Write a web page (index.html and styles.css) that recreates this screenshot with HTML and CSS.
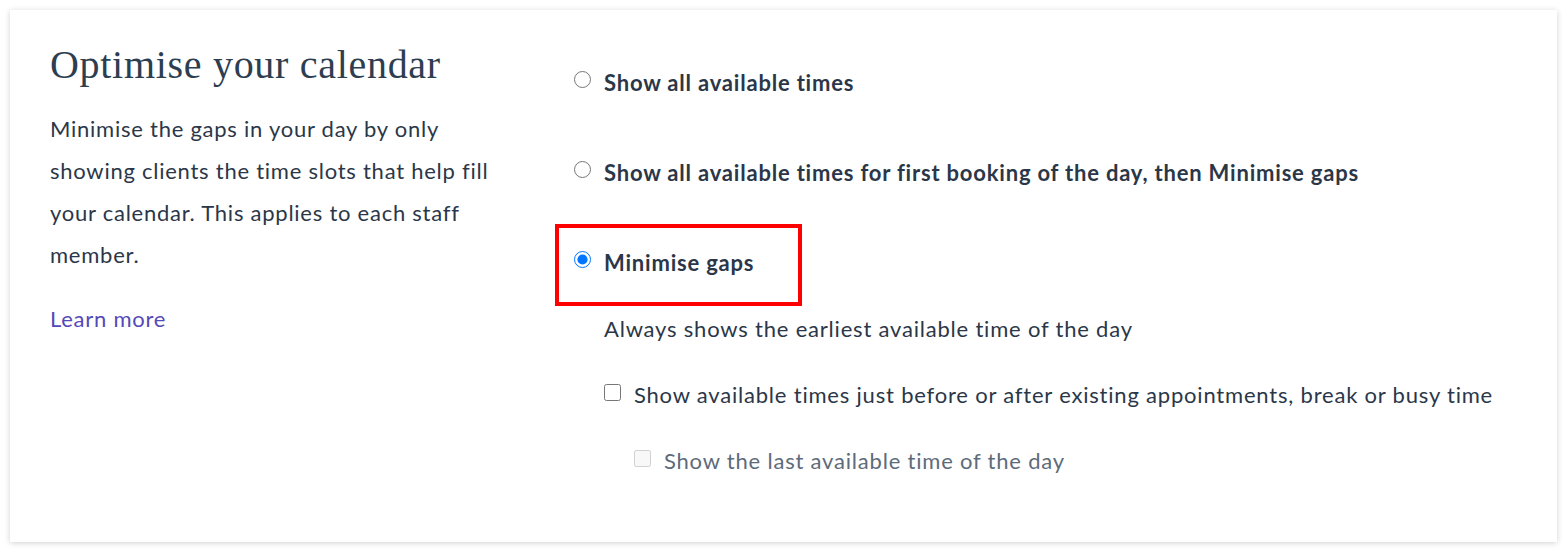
FILE: index.html
```html
<!DOCTYPE html>
<html lang="en">
<head>
<meta charset="utf-8">
<title>Optimise your calendar</title>
<link rel="stylesheet" href="styles.css">
</head>
<body>
<section class="card">
  <div class="intro">
    <h2 class="title">Optimise your calendar</h2>
    <p class="desc">Minimise the gaps in your day by only showing clients the time slots that help fill your calendar. This applies to each staff member.</p>
    <a class="link" href="#">Learn more</a>
  </div>
  <div class="options">
    <label class="radio-row">
      <input type="radio" name="mode" class="radio">
      <span class="radio-label">Show all available times</span>
    </label>
    <label class="radio-row">
      <input type="radio" name="mode" class="radio">
      <span class="radio-label">Show all available times for first booking of the day, then Minimise gaps</span>
    </label>
    <label class="radio-row highlighted">
      <input type="radio" name="mode" class="radio" checked>
      <span class="radio-label">Minimise gaps</span>
      <span class="highlight-box"></span>
    </label>
    <div class="sub">
      <p class="sub-desc">Always shows the earliest available time of the day</p>
      <label class="check-row">
        <input type="checkbox" class="check">
        <span class="check-label">Show available times just before or after existing appointments, break or busy time</span>
      </label>
      <label class="check-row nested disabled">
        <input type="checkbox" class="check" disabled>
        <span class="check-label">Show the last available time of the day</span>
      </label>
    </div>
  </div>
</section>
</body>
</html>
```
FILE: styles.css
```css
html, body {
  margin: 0;
  background: #ffffff;
}
body {
  padding: 10px;
  font-family: Lato, "Liberation Sans", sans-serif;
  color: #2b3748;
}
.card {
  display: grid;
  grid-template-columns: 484px 1fr;
  gap: 40px;
  padding: 30px 40px 56px 40px;
  background: #fff;
  box-shadow: 0 1px 6px rgba(0, 0, 0, 0.18);
  min-height: 446px;
}
.title {
  margin: 0;
  font-family: "Liberation Serif", "DejaVu Serif", serif;
  font-weight: 400;
  font-size: 40px;
  letter-spacing: 0.7px;
  line-height: 50px;
  color: #2c3e50;
}
.desc {
  margin: 18px 0 0 0;
  font-size: 22px;
  letter-spacing: 0.75px;
  line-height: 42px;
  max-width: 462px;
}
.link {
  display: inline-block;
  margin-top: 22px;
  font-size: 22px;
  letter-spacing: 0.75px;
  line-height: 42px;
  color: #5549b8;
  text-decoration: none;
}
.options {
  display: flex;
  flex-direction: column;
  padding-top: 28px;
}
.radio-row {
  position: relative;
  display: flex;
  align-items: center;
  gap: 13px;
  height: 30px;
  margin-bottom: 60px;
}
.radio-row.highlighted {
  margin-bottom: 36px;
}
.radio {
  width: 17px;
  height: 17px;
  margin: 0;
  flex: none;
  position: relative;
  top: -4px;
}
.radio-label {
  font-weight: 700;
  font-size: 22px;
  letter-spacing: 0.8px;
  line-height: 30px;
}
.highlight-box {
  position: absolute;
  left: -19px;
  top: -24px;
  width: 239px;
  height: 74px;
  border: 4px solid #ff0000;
}
.sub {
  padding-left: 30px;
  display: flex;
  flex-direction: column;
  gap: 36px;
}
.sub-desc {
  margin: 0;
  font-size: 22px;
  letter-spacing: 0.8px;
  line-height: 30px;
}
.check-row {
  display: flex;
  align-items: center;
  gap: 13px;
  height: 30px;
}
.check-row.nested {
  padding-left: 30px;
}
.check {
  width: 17px;
  height: 17px;
  margin: 0;
  flex: none;
  position: relative;
  top: -3px;
}
.check-label {
  font-size: 22px;
  letter-spacing: 0.8px;
  line-height: 30px;
}
.disabled .check-label {
  color: #5d6b7a;
}
```
